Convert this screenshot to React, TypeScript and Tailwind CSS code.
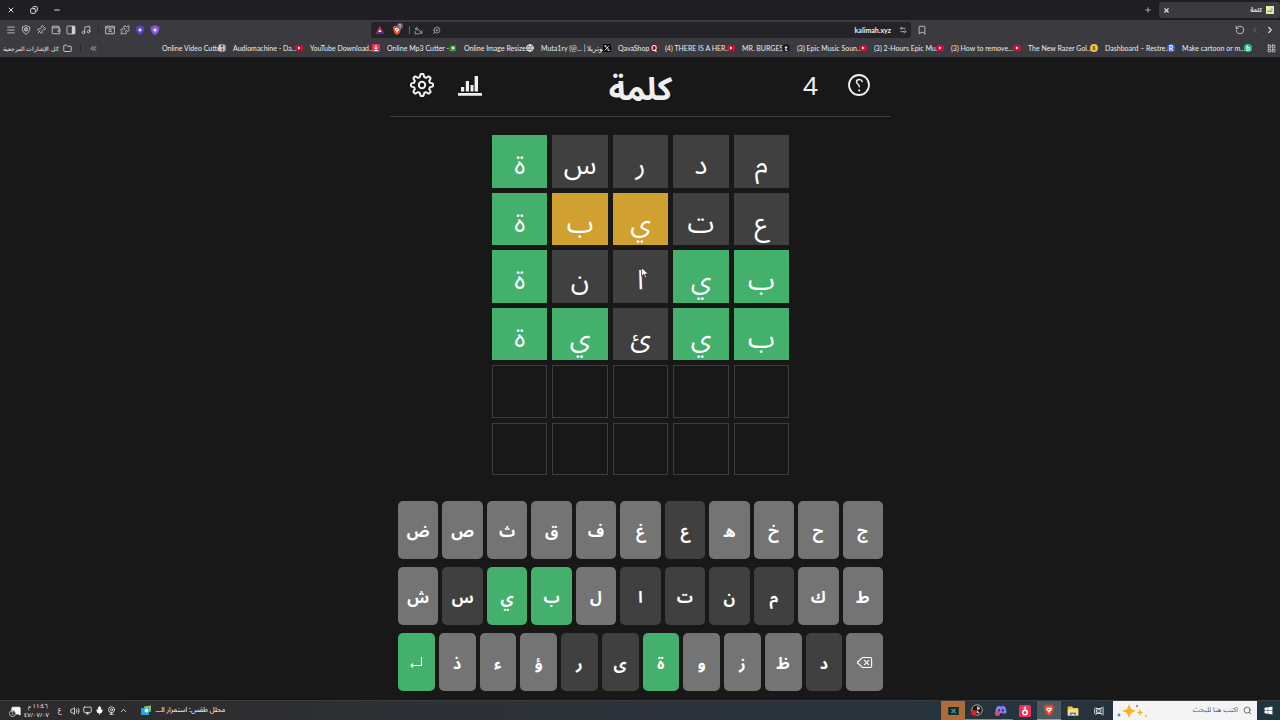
import React from "react";
import { FaDiscord, FaWindows } from "react-icons/fa";
import {
  Menu, Shield, Pin, Wallet, Music, Puzzle, Folder, X, Minus, Copy, Plus, Bookmark,
  RotateCcw, ChevronLeft, ChevronRight, ChevronsLeft, LayoutGrid, ZoomIn, Volume2, Monitor, Mic, ChevronUp,
  Search, Globe, Settings2, MessageSquare, Delete, Webcam, Film,
} from "lucide-react";

type State = "hit" | "near" | "miss" | "idle";

const tileColors: Record<State, string> = {
  hit: "bg-[#43b06b]",
  near: "bg-[#d0a030]",
  miss: "bg-[#404040]",
  idle: "border border-[#3c3c3c]",
};

const keyColors: Record<State, string> = {
  hit: "bg-[#43b06b]",
  near: "bg-[#d0a030]",
  miss: "bg-[#404040]",
  idle: "bg-[#747474]",
};

const guesses: [string, State][][] = [
  [["م", "miss"], ["د", "miss"], ["ر", "miss"], ["س", "miss"], ["ة", "hit"]],
  [["ع", "miss"], ["ت", "miss"], ["ي", "near"], ["ب", "near"], ["ة", "hit"]],
  [["ب", "hit"], ["ي", "hit"], ["ا", "miss"], ["ن", "miss"], ["ة", "hit"]],
  [["ب", "hit"], ["ي", "hit"], ["ئ", "miss"], ["ي", "hit"], ["ة", "hit"]],
  [["", "idle"], ["", "idle"], ["", "idle"], ["", "idle"], ["", "idle"]],
  [["", "idle"], ["", "idle"], ["", "idle"], ["", "idle"], ["", "idle"]],
];

const keyRows = [
  ["ض", "ص", "ث", "ق", "ف", "غ", "ع", "ه", "خ", "ح", "ج"],
  ["ش", "س", "ي", "ب", "ل", "ا", "ت", "ن", "م", "ك", "ط"],
  ["enter", "ذ", "ء", "ؤ", "ر", "ى", "ة", "و", "ز", "ظ", "د", "delete"],
];
const hits = ["ي", "ب", "ة", "enter"];
const misses = ["ع", "س", "ا", "ت", "ن", "م", "ر", "ى", "د"];

function keyState(k: string): State {
  if (hits.includes(k)) return "hit";
  return misses.includes(k) ? "miss" : "idle";
}

function Yt() {
  return (
    <svg viewBox="0 0 16 16" className="size-2 shrink-0">
      <rect x="0" y="2" width="16" height="12" rx="5" fill="#d0103a" />
      <path d="M6 5l5 3-5 3z" fill="#fff" />
    </svg>
  );
}

function Badge({ cls, children }: { cls: string; children: React.ReactNode }) {
  return <span className={`flex size-2 shrink-0 items-center justify-center text-[7px] leading-none font-bold ${cls}`}>{children}</span>;
}

const bookmarks: { label: string; width: string; icon: React.ReactNode }[] = [
  { label: "Online Video Cutter", width: "w-16", icon: <Film className="size-2 shrink-0" /> },
  { label: "Audiomachine - Da...", width: "w-[70px]", icon: <Yt /> },
  { label: "YouTube Download...", width: "w-[70px]", icon: (
    <svg viewBox="0 0 16 16" className="size-2 shrink-0"><rect width="16" height="16" rx="2" fill="#e0305a" /><path d="M8 2v8M4.500 7L8 10.500 11.500 7M4 13h8" stroke="#fff" strokeWidth="2" fill="none" /></svg>
  ) },
  { label: "Online Mp3 Cutter -...", width: "w-[70px]", icon: (
    <svg viewBox="0 0 16 16" className="size-2 shrink-0"><path d="M8 1l2 3 4-1-1 4 3 1-3 2 1 4-4-1-2 3-2-3-4 1 1-4-3-2 3-1-1-4 4 1z" fill="#3aa53a" /><circle cx="8" cy="8" r="2.5" fill="#e8f6e0" /></svg>
  ) },
  { label: "Online Image Resize...", width: "w-[70px]", icon: <Globe className="size-2 shrink-0" strokeWidth={3} /> },
  { label: "Muta1ry (@... | موتريلا", width: "w-[70px]", icon: (
    <svg viewBox="0 0 16 16" className="size-2 shrink-0"><rect width="16" height="16" rx="1" fill="#050505" /><path d="M3 3h3l7 10h-3zM13 3L3 13" stroke="#fff" strokeWidth="1.4" fill="none" /></svg>
  ) },
  { label: "QavaShop", width: "w-10", icon: <Badge cls="rounded-full bg-[#6b1028] text-white">Q</Badge> },
  { label: "(4) THERE IS A HER...", width: "w-[70px]", icon: <Yt /> },
  { label: "MR. BURGESS", width: "w-12", icon: <Badge cls="rounded-full bg-[#101c38] text-white">t</Badge> },
  { label: "(3) Epic Music Soun...", width: "w-[70px]", icon: <Yt /> },
  { label: "(3) 2-Hours Epic Mu...", width: "w-[70px]", icon: <Yt /> },
  { label: "(3) How to remove...", width: "w-[70px]", icon: <Yt /> },
  { label: "The New Razer Gol...", width: "w-[70px]", icon: (
    <svg viewBox="0 0 16 16" className="size-2 shrink-0"><circle cx="8" cy="8" r="8" fill="#eec04a" /><path d="M5 4h5v3l1 5H5l1-5z" fill="#9a6a18" /></svg>
  ) },
  { label: "Dashboard – Restre...", width: "w-[70px]", icon: <Badge cls="rounded-full bg-[#2f66dc] text-white">R</Badge> },
  { label: "Make cartoon or m...", width: "w-[70px]", icon: <Badge cls="rounded-full bg-[#2ec076] text-white">h</Badge> },
];

function BraveShield({ className, color }: { className: string; color: string }) {
  return (
    <svg viewBox="0 0 16 16" className={className}>
      <path d="M4 1h8l3 3-1 2 .3 1-2.3 6-4 3-4-3L1.700 7 2 6 1 4z" fill={color} />
      <path d="M4 5l2.500 0L8 4.500l1.500.5L12 5l-1 3.500-2 1.500L8 13l-1-3-2-1.500z" fill="#fff" />
      <path d="M6.500 6.500h3L8 9z" fill={color} />
    </svg>
  );
}

function VioletShield({ color }: { color: string }) {
  return (
    <svg viewBox="0 0 16 16" className="size-[10px]">
      <path d="M8 0l7 3c0 7-2 10-7 13C3 13 1 10 1 3z" fill={color} />
      <path d="M8 4l1.200 2.600L12 8l-2.800 1.200L8 12 6.800 9.200 4 8l2.800-1.400z" fill="#efe8ff" />
    </svg>
  );
}

function TabStrip() {
  const btn = "flex items-center justify-center";
  return (
    <div className="flex h-5 items-center justify-between bg-[#1f1e23] pl-[7px] text-[#dcdcdc]">
      <div className="flex items-center gap-[15px]">
        <button aria-label="إغلاق" className={btn}><X className="size-2" strokeWidth={3} /></button>
        <button aria-label="استعادة" className={btn}><Copy className="size-2 -scale-x-100" strokeWidth={3} /></button>
        <button aria-label="تصغير" className={btn}><Minus className="size-2" strokeWidth={3} /></button>
      </div>
      <div className="flex items-center gap-[7px]">
        <button aria-label="علامة تبويب جديدة" className={btn}><Plus className="size-2" strokeWidth={2} /></button>
        <div className="flex h-4 w-[121px] items-center justify-between rounded-[3px] bg-[#3b3a3f] pr-[6px] pl-1">
          <button aria-label="إغلاق علامة التبويب" className={btn}><X className="size-[7px]" strokeWidth={4} /></button>
          <div className="flex items-center gap-1">
            <span className="text-[6px] font-bold">كلمة</span>
            <span className="flex size-2 items-center justify-center bg-[#e6ecb0] text-[6px] leading-none text-[#5a6420]">ك</span>
          </div>
        </div>
      </div>
    </div>
  );
}

function Toolbar() {
  const ic = "size-[10px] shrink-0";
  return (
    <div className="flex h-5 items-center text-[#d2d2d4]">
      <div className="flex flex-1 items-center gap-[5px] pl-[6px]">
        <Menu className={ic} />
        <svg viewBox="0 0 24 24" className={ic} fill="none" stroke="currentColor" strokeWidth="2">
          <path d="M12 1.500l9 3.500c0 9-3 14-9 17.500C6 19 3 14 3 5z" /><circle cx="12" cy="10.500" r="4" fill="currentColor" fillOpacity=".5" />
        </svg>
        <Pin className="size-[10px] shrink-0 rotate-45" />
        <Wallet className={ic} />
        <svg viewBox="0 0 24 24" className={ic}>
          <rect x="2.500" y="2.500" width="19" height="19" rx="2" fill="none" stroke="currentColor" strokeWidth="2" /><path d="M14 2.500h7.500v19H14z" fill="currentColor" />
        </svg>
        <Music className={ic} />
        <span className="mr-px ml-[2px] h-2 w-px bg-[#27262b]" />
        <svg viewBox="0 0 24 24" className={ic} fill="none" stroke="currentColor" strokeWidth="2">
          <path d="M1.500 3h21v18h-21zM1.500 7h21" /><circle cx="12" cy="13" r="3" /><path d="M14 15l3 3" />
        </svg>
        <Puzzle className={ic} />
        <VioletShield color="#5840c0" />
        <VioletShield color="#8a55dc" />
      </div>
      <div className="flex h-4 w-[540px] shrink-0 items-center justify-between rounded-[3px] bg-[#242328] px-1">
        <div className="flex items-center gap-[7px]">
          <svg viewBox="0 0 16 16" className={ic}>
            <path d="M8 1l7 13H8z" fill="#8a2a80" /><path d="M8 1L1 14h7z" fill="#e03a30" /><path d="M1 14h14l-3-3H4z" fill="#5a2aa8" /><path d="M8 7l2.500 4h-5z" fill="#fff" />
          </svg>
          <span className="relative">
            <BraveShield className="size-[10px]" color="#ee4a25" />
            <span className="absolute -top-[2px] left-[5px] flex size-[6px] items-center justify-center rounded-full bg-[#5a6a80] text-[5px] leading-none text-white">1</span>
          </span>
          <span className="-mr-[3px] h-2 w-px bg-[#66666a]" />
          <svg viewBox="0 0 16 16" className="size-[9px]" fill="none" stroke="#a8a8aa" strokeWidth="1.6">
            <path d="M6 2L2 5l4 3M2 5h5l7 8M2 9v5h7M14 8v5h-5" />
          </svg>
          <ZoomIn className="ml-[2px] size-[9px] -scale-x-100 text-[#b0b0b2]" />
        </div>
        <div className="flex items-center gap-2 font-['Lato','Noto_Sans',sans-serif]">
          <span className="text-[7px] font-bold text-[#ededed]">kalimah.xyz</span>
          <Settings2 className="size-2" />
        </div>
      </div>
      <div className="flex w-[369px] items-center justify-between pr-[5px] pl-[6px]">
        <Bookmark className={ic} />
        <div className="flex items-center gap-[5px]">
          <RotateCcw className={ic} />
          <ChevronLeft className="size-[10px] text-[#77777a]" />
          <ChevronRight className="size-[10px]" strokeWidth={3} />
        </div>
      </div>
    </div>
  );
}

function BookmarkBar() {
  return (
    <div className="flex h-[17px] items-center justify-between pr-1 pb-px pl-[7px] font-['Lato','Noto_Sans',sans-serif] text-[7px] whitespace-nowrap text-[#ececec]">
      <div className="flex items-center gap-1">
        <a href="#all" dir="rtl" className="w-[52px] text-[6px]">كل الإشارات المرجعية</a>
        <Folder className="size-[9px]" />
        <span className="mx-1 h-2 w-px bg-[#27262b]" />
        <ChevronsLeft className="size-[9px]" />
      </div>
      <div className="flex items-center gap-[7px]">
        {bookmarks.map((b) => (
          <a key={b.label} href="#bookmark" className={`flex items-center justify-between ${b.width}`}>
            <span className="w-0 flex-1">{b.label}</span>
            {b.icon}
          </a>
        ))}
        <LayoutGrid className="ml-2 size-[9px]" />
      </div>
    </div>
  );
}

const gear = Array.from({ length: 97 }, (_, i) => {
  const a = (i / 96) * Math.PI * 2;
  const r = 9.6 + 1.5 * Math.tanh(2.5 * Math.cos(8 * a));
  return `${i ? "L" : "M"}${(12 + r * Math.sin(a)).toFixed(2)} ${(12 - r * Math.cos(a)).toFixed(2)}`;
}).join("");

function GameHeader() {
  return (
    <header className="flex h-[60px] w-[501px] items-center justify-between border-b border-[#3c3c3c] px-5 pb-1 text-[#f0f0f0]">
      <div className="flex w-[100px] items-center gap-6">
        <button aria-label="الإعدادات">
          <svg viewBox="0 0 24 24" className="size-6" fill="none" stroke="currentColor" strokeWidth="2" strokeLinejoin="round">
            <path d={gear} /><circle cx="12" cy="12" r="3.200" />
          </svg>
        </button>
        <button aria-label="الإحصائيات">
          <svg viewBox="0 0 24 24" className="size-6" fill="currentColor">
            <path d="M0 20h24v2.800H0zM3 14h3.200v4.500H3zM7.800 8H11v10.500H7.800zM12.500 12h3v6.500h-3zM16.600 3h3.400v15.500h-3.400z" />
          </svg>
        </button>
      </div>
      <h1 className="pt-[6px] text-[32px] leading-none font-bold">كلمة</h1>
      <div className="flex w-[100px] items-center justify-end gap-[29px]">
        <span className="text-[26px] leading-none">4</span>
        <button aria-label="مساعدة">
          <svg viewBox="0 0 24 24" className="size-6" fill="none" stroke="currentColor" strokeWidth="1.800" strokeLinecap="round">
            <circle cx="12" cy="12" r="10" />
            <path d="M15.200 8.500C14.800 7 13.500 6.500 12.300 6.500c-1.700 0-2.800 1.100-2.800 2.500 0 2.200 2.800 1.800 2.800 4.800" strokeWidth="1.500" /><path d="M12.200 17.200v.2" strokeWidth="2" />
          </svg>
        </button>
      </div>
    </header>
  );
}

function Board() {
  return (
    <div dir="rtl" className="mt-[18px] grid h-[340px] w-[297px] grid-cols-5 grid-rows-6 gap-[5px]">
      {guesses.flat().map(([ch, state], i) => (
        <div key={i} className={`relative flex items-center justify-center pt-[5px] text-[27px] leading-none text-white ${tileColors[state]}`}>
          {ch}
          {i === 12 && (
            <svg viewBox="0 0 12 18" className="absolute top-[17px] left-7 h-[12px] w-2">
              <path d="M1 1v13l3-3 2.500 5 2-1-2.300-4.500H11z" fill="#fff" stroke="#222" />
            </svg>
          )}
        </div>
      ))}
    </div>
  );
}

function Keyboard() {
  return (
    <div className="mt-[26px] flex w-[485px] flex-col gap-2">
      {keyRows.map((row, r) => (
        <div key={r} className="flex h-[58px] gap-1">
          {row.map((k) => (
            <button
              key={k}
              aria-label={k === "enter" ? "إدخال" : k === "delete" ? "حذف" : undefined}
              className={`flex flex-1 items-center justify-center rounded-[5px] pt-[2px] text-base leading-none font-bold text-white ${keyColors[keyState(k)]}`}
            >
              {k === "enter" ? (
                <svg viewBox="0 0 14 14" className="size-[14px]" fill="none" stroke="#fff" strokeWidth="1.100">
                  <path d="M12.500 1v8.500H2M4 7.500l-2 2 2 2" />
                </svg>
              ) : k === "delete" ? (
                <Delete className="mb-[2px] size-[17px]" strokeWidth={1.6} />
              ) : (
                k
              )}
            </button>
          ))}
        </div>
      ))}
    </div>
  );
}

function Taskbar() {
  const cell = "flex h-full w-6 items-center justify-center";
  return (
    <footer className="flex h-5 items-center justify-between border-t border-[#3a3c40] bg-linear-to-r from-[#2d2a2a] via-[#2d333b] to-[#20343e] text-[7px] whitespace-nowrap text-white">
      <div className="flex items-center pl-[9px]">
        <span className="relative">
          <MessageSquare className="ml-[2px] size-[10px] -scale-x-100 fill-white" />
          <span className="absolute top-[4px] left-0 flex size-[7px] items-center justify-center rounded-full border border-[#bbb] bg-[#2d2a2a] text-[5px] leading-none">1</span>
        </span>
        <div dir="rtl" className="ml-[6px] flex w-[22px] flex-col text-center text-[6px] leading-[9px]">
          <span>١١:٤٦ م</span>
          <span>٤٧/٠٧/٠٧</span>
        </div>
        <span className="ml-[9px]">ع</span>
        <div className="ml-2 flex items-center gap-[3px]">
          <Volume2 className="size-[10px]" />
          <Monitor className="size-[9px]" />
          <Mic className="size-[9px] fill-white" />
          <Webcam className="size-[9px]" />
          <ChevronUp className="size-[9px]" />
        </div>
        <svg viewBox="0 0 24 24" className="ml-3 size-[12px]">
          <path d="M8 3l14-2v12L10 16z" fill="#8bc34a" /><path d="M2 6h16v14H2z" fill="#20a8d8" /><circle cx="13" cy="11" r="4" fill="#e8f8ff" />
        </svg>
        <span dir="rtl" className="ml-1">محلل طقس: استمرار الـــ</span>
      </div>
      <div className="flex h-full items-center">
        <div className={`${cell} bg-[#b06c38]`}>
          <svg viewBox="0 0 16 12" className="h-2 w-[11px]"><rect width="16" height="12" fill="#152c2c" /><path d="M5 3l6 6M11 3L5 9" stroke="#3aa088" strokeWidth="2" /></svg>
        </div>
        <div className={`${cell} border-b border-[#5a90d0]`}>
          <svg viewBox="0 0 16 16" className="size-3"><circle cx="8" cy="8" r="7" fill="#151515" stroke="#ccc" /><path d="M8 3a4 4 0 014 4l-4 1zM12 12a4 4 0 01-5-1l1-3z" fill="#bbb" /><circle cx="4" cy="11.500" r="3.500" fill="#e02020" /></svg>
        </div>
        <div className={`${cell} border-b border-[#5a90d0]`}>
          <span className="relative">
            <FaDiscord className="size-3 text-[#7f80f2]" />
            <span className="absolute bottom-0 left-0 size-[5px] rounded-full bg-[#e84a6a]" />
          </span>
        </div>
        <div className={cell}>
          <svg viewBox="0 0 16 16" className="size-3"><rect width="16" height="16" rx="2" fill="#ee3058" /><path d="M8 2v5M6 4h4" stroke="#fff" strokeWidth="1.500" /><circle cx="8" cy="10" r="3" fill="none" stroke="#fff" strokeWidth="2" /></svg>
        </div>
        <div className={`${cell} border-b border-[#70a8e0] bg-[#4c585f]`}><BraveShield className="size-3" color="#f04028" /></div>
        <div className={cell}>
          <svg viewBox="0 0 16 16" className="size-3"><path d="M1 2h6l1 2h7v10H1z" fill="#f5c842" /><path d="M1 6h14v8H1z" fill="#ffe08a" /><path d="M4 10h8v4h-2v-2H6v2H4z" fill="#3a90d8" /></svg>
        </div>
        <div className="flex h-full w-7 items-center justify-center">
          <svg viewBox="0 0 16 16" className="size-[10px]" fill="none" stroke="#eee" strokeWidth="1.400"><path d="M3 2v2h9V2M3 14v-2h9v2M4 6h7v4H4zM14.500 1v14M1 4v8" /></svg>
        </div>
        <div className="flex h-full w-[144px] items-center justify-between bg-[#f4f4f4] pr-[5px] pl-1">
          <svg viewBox="0 0 32 16" className="h-4 w-8">
            <path d="M12 1l2 5 5 2-5 2-2 5-2-5-5-2 5-2z" fill="#f5b820" /><path d="M23 6l1 2.500 2.500 1-2.500 1-1 2.500-1-2.500-2.500-1 2.500-1z" fill="#f5b820" /><circle cx="2" cy="12" r="1.400" fill="#2a9ad0" /><circle cx="20" cy="3" r="1" fill="#d05030" /><circle cx="29" cy="13" r="1" fill="#d8b060" />
          </svg>
          <label dir="rtl" className="flex items-center gap-[5px] text-[#444]">
            <Search className="size-[9px]" />
            <input placeholder="اكتب هنا للبحث" aria-label="اكتب هنا للبحث" className="w-16 bg-transparent text-[7px] outline-none placeholder:text-[#555]" />
          </label>
        </div>
        <button aria-label="ابدأ" className="flex w-[23px] items-center justify-center"><FaWindows className="size-[9px]" /></button>
      </div>
    </footer>
  );
}

export default function App() {
  return (
    <div className="flex min-h-screen flex-col bg-[#181818] font-['Noto_Sans','Noto_Sans_Arabic','DejaVu_Sans',sans-serif]">
      <TabStrip />
      <div className="bg-[#3b3a3f]">
        <Toolbar />
        <BookmarkBar />
      </div>
      <main className="flex flex-1 flex-col items-center pb-2 pl-px">
        <GameHeader />
        <Board />
        <Keyboard />
      </main>
      <Taskbar />
    </div>
  );
}
